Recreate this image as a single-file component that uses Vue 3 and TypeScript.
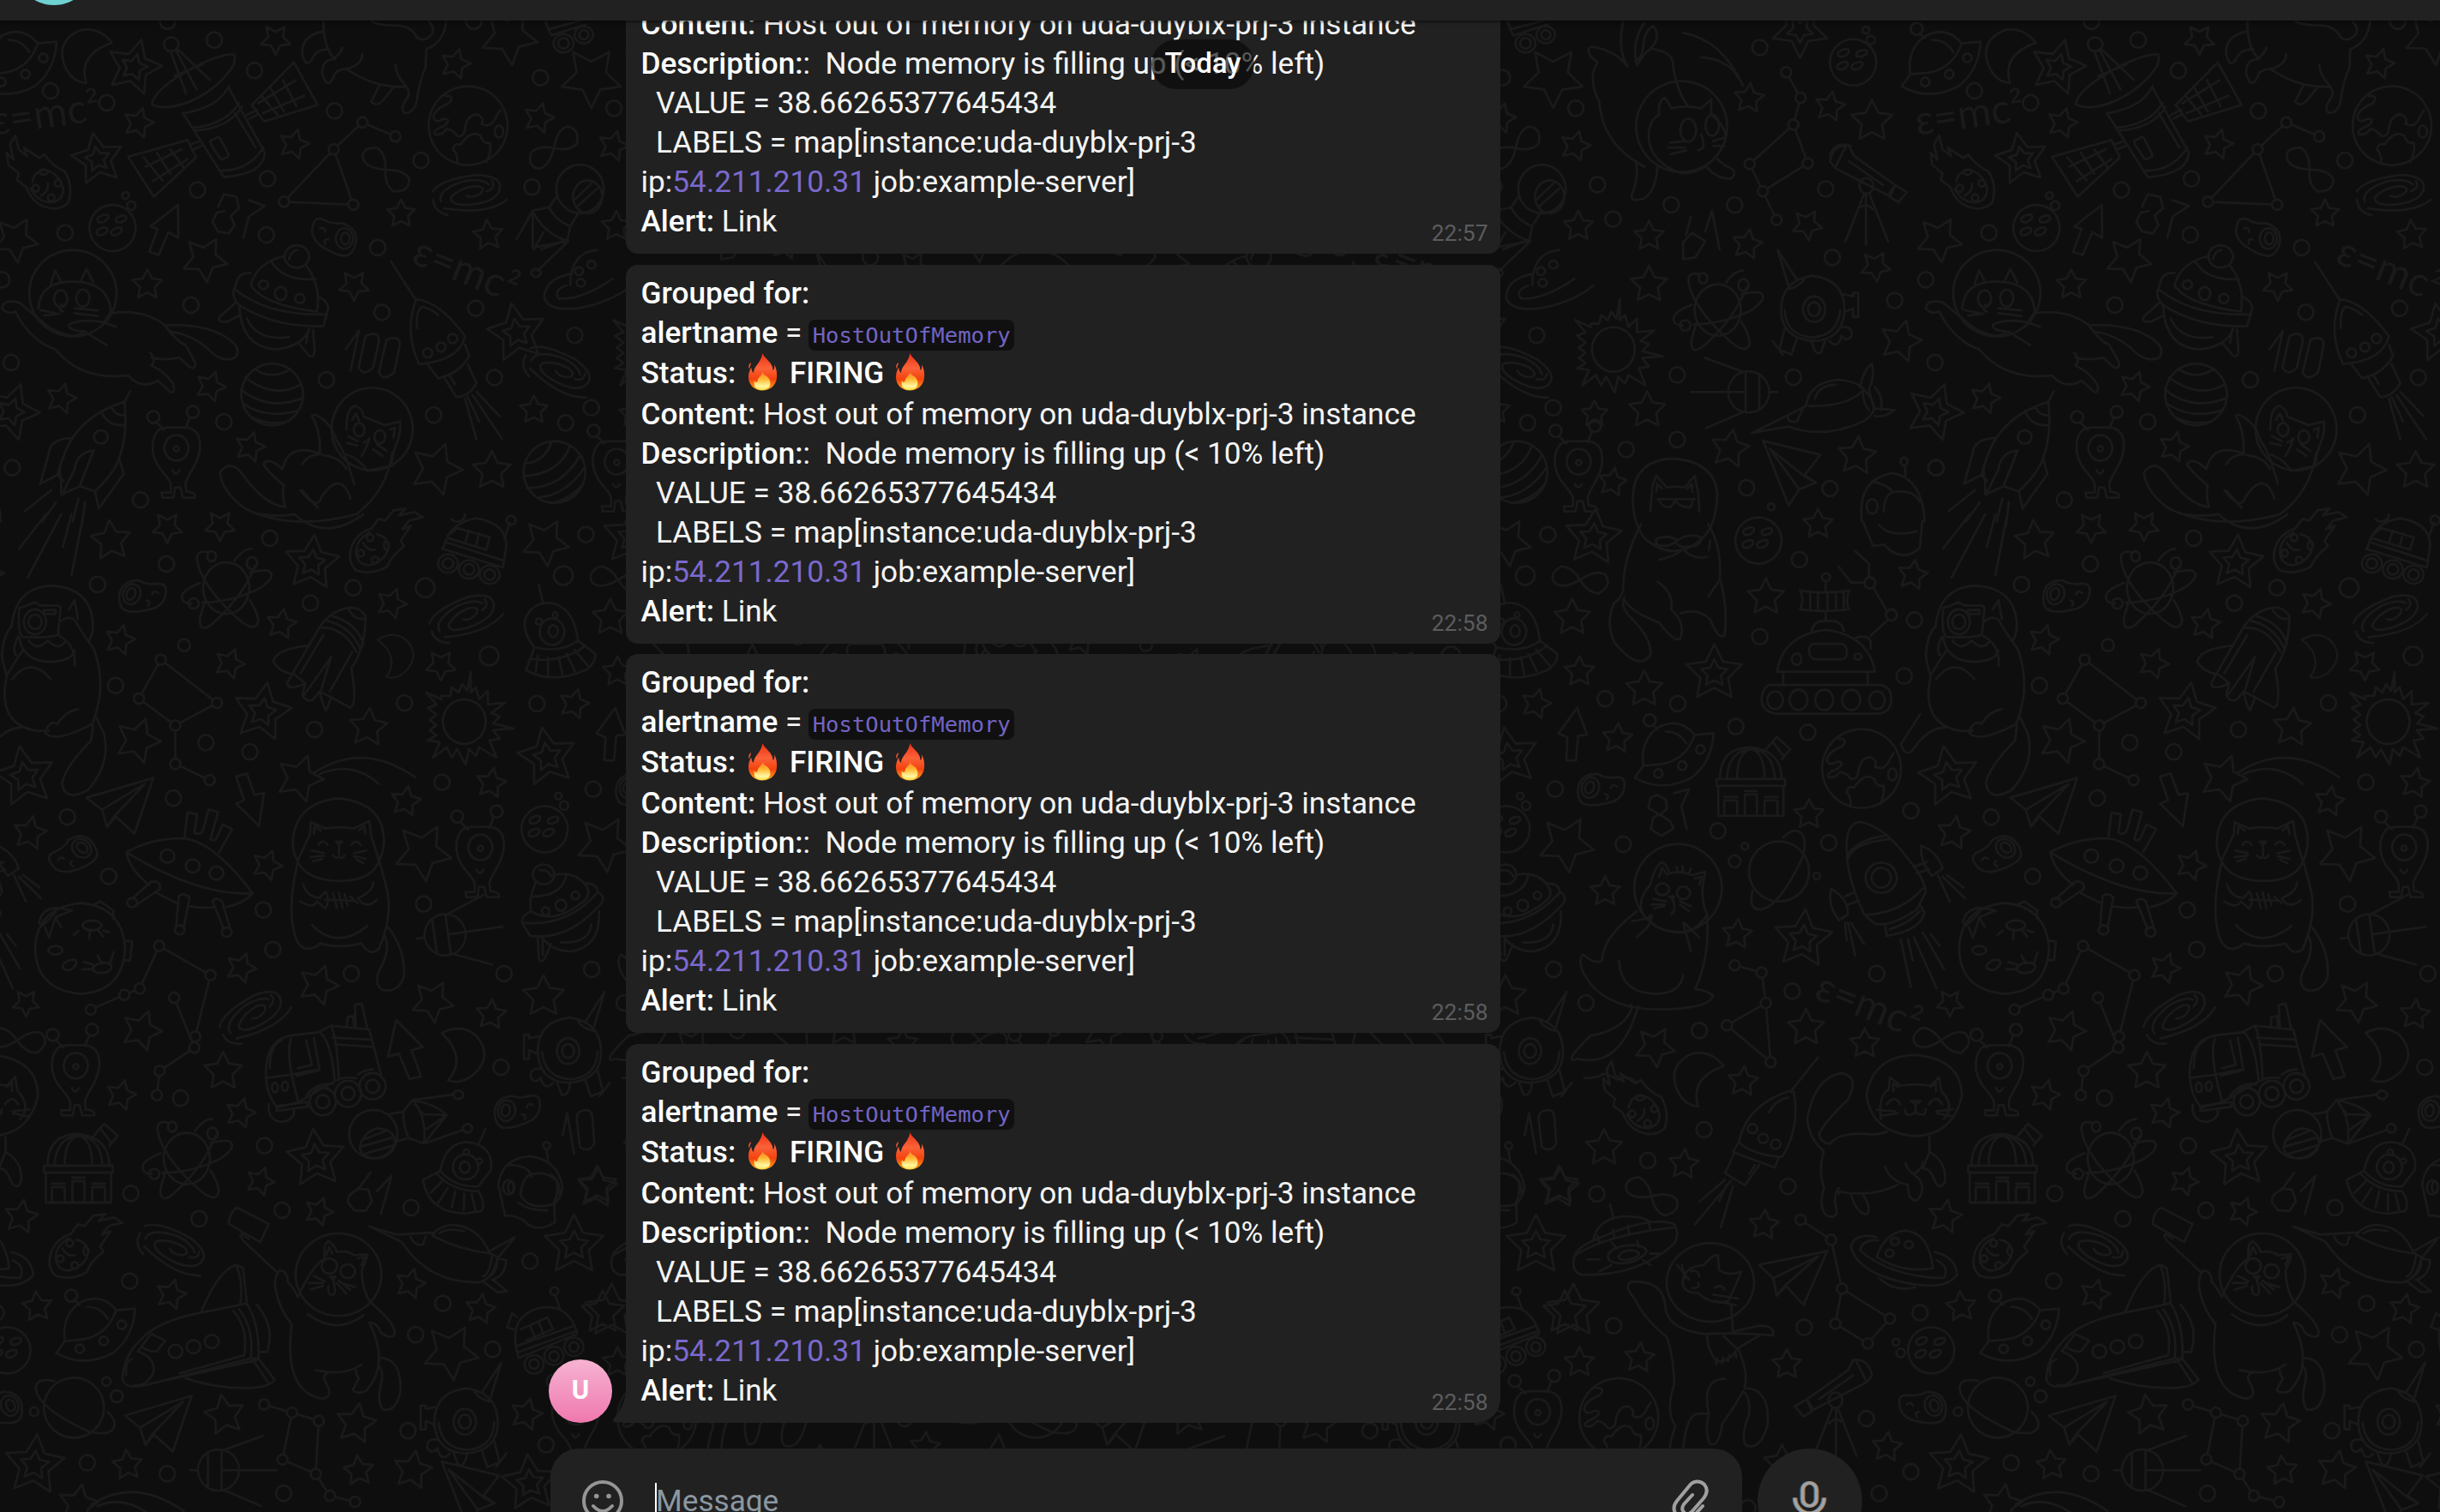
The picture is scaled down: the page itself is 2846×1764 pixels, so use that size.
<script setup lang="ts">
type Spot = [number, number, number?, number?]
type Placed = [string, number, number, number?, number?]

interface Panel {
  x: number
  y: number
  sx: number
  sy: number
  stars: Spot[]
  doubles: Spot[]
  dots: Spot[]
  shapes: Placed[]
  chains: number[][]
  strokes: string[]
}

interface Message {
  id: number
  time: string
  scrolled?: boolean
  last?: boolean
}

const messages: Message[] = [
  { id: 1, time: '22:57', scrolled: true },
  { id: 2, time: '22:58' },
  { id: 3, time: '22:58' },
  { id: 4, time: '22:58', last: true },
]

const tileWidth = 1122
const tileOffsets = [-1, 0, 1, 2].map((n) => n * tileWidth)

const L = 0.4464
const R = 0.699
const V = 0.3827

/* Doodle artwork of the chat wallpaper, one repeating tile split in panels. */
const panels: Panel[] = [
  {
    x: 0, y: 0, sx: L, sy: V,
    stars: [
      [720, 120, 18, 36], [362, 375, 18, 15], [768, 440, 18, 15], [1190, 195, 18, 15], [1048, 652, 17, 0],
      [1275, 717, 18, -5], [1408, 360, 18, 15], [385, 868, 18, 0], [925, 870, 18, 36], [550, 1178, 18, 20],
      [160, 1215, 18, 15], [653, 1363, 18, 15], [1395, 1250, 17, 0], [1285, 1435, 23, 0], [535, 790, 27, 30],
      [40, 730, 27, 30], [1330, 110, 34, 30], [1140, 1430, 31, 20], [1545, 235, 36, 36],
    ],
    doubles: [[350, 205, 33, 15], [255, 485, 31, -10], [1350, 1015, 35, -10], [28, 1255, 34, 20]],
    dots: [
      [560, 122], [665, 215], [132, 277], [279, 313], [874, 338], [1412, 237], [1100, 489], [699, 545], [516, 579],
      [1390, 570], [170, 710], [696, 716], [987, 755], [499, 930], [998, 952], [1243, 940], [1502, 1022],
      [29, 1105], [853, 1158], [1292, 1151], [1133, 1265], [585, 1286], [1478, 1289], [1545, 1243], [32, 1426],
      [367, 1524], [5, 853], [438, 65], [343, 627, 5], [328, 596, 4], [1238, 65],
    ],
    shapes: [
      ['alien', 460, 1368], ['earth', 1222, 383], ['galaxy', 1228, 588], ['galaxy', 1463, 1130, 35],
      ['stripes', 710, 1203], ['stripes', 1448, 1440, -40], ['comet', 125, 565, -90], ['saucer', 45, 190],
      ['button', 293, 695], ['bean', 872, 722], ['infinity', 1007, 517, 52], ['infinity', 1447, 452, -28],
      ['moon', 225, 172],
    ],
    chains: [[742, 615, 872, 455, 923, 624, 742, 615], [872, 455, 947, 373, 1033, 416]],
    strokes: [
      /* satellite */
      'M397,318 C400,260 560,160 612,166 C616,180 612,190 610,200 C560,290 450,350 397,318 Z M447,114 a19,21 0 1 0 1,0 M445,155 L486,285 M458,150 L514,273 M462,148 L548,243 M456,232 L530,196 M478,345 Q570,330 598,262 M478,345 L585,540 Q690,530 692,465 L598,268 M503,390 Q590,380 624,315 M512,398 Q600,390 632,325 M614,345 L668,450 M580,520 Q650,520 688,450 M549,430 l20,-12 q6,0 8,8 l20,44 q0,10 -6,10 l-10,6 q-6,0 -8,-8 l-22,-38 Z',
      'M645,350 L672,335 M652,362 L675,348 M658,320 L768,190 L830,320 L690,370 Z M682,290 L725,350 M705,265 L742,340 M740,245 L775,325 M687,345 L795,292 M675,315 L772,245 M500,440 L522,430 M506,455 L526,445 M335,478 L490,427 L512,480 L402,600 Z M375,480 L425,550 M410,465 L445,530 M445,455 L480,510 M380,508 L475,455 M400,552 L490,485',
      /* upside-down cat */
      'M845,62 Q845,150 876,180 M845,95 Q785,110 790,165 Q800,215 818,175 Q828,150 860,150 M876,180 Q840,180 842,225 Q855,275 872,235 Q875,212 905,210 Q945,200 947,165 M905,210 Q980,270 1062,264 Q1035,230 1033,198 M1062,264 Q1075,285 1060,305 Q1045,330 1057,344 Q1085,345 1090,300 Q1095,250 1112,205 L1114,150 Q1160,130 1166,65 M990,262 Q975,300 970,310 Q985,330 1005,300 L1028,266 M895,145 Q890,165 870,180 M970,65 Q990,78 1040,78 Q1075,80 1090,115 Q1110,130 1128,105 Q1138,85 1120,65',
      /* flying cat */
      'M190,762 a114,132 0 1 0 1,0 M100,940 Q105,858 190,858 Q285,860 290,950 L272,982 M133,866 L144,824 L160,860 M210,858 L226,820 L244,862 M158,885 a17,26 0 1 0 1,0 M216,883 a17,26 0 1 0 1,0 M162,928 Q150,945 165,950 M105,945 l40,10 M115,962 l40,-6 M195,940 l60,6 M195,955 l60,8',
      'M40,950 Q20,960 5,940 Q10,910 50,922 Q90,960 120,990 Q150,1018 190,1024 Q210,1020 220,1010 L278,1052 M220,1010 Q180,1010 180,990 Q210,970 270,982 L303,996 M290,955 Q370,940 430,990 Q460,1040 485,1052 L510,1105 Q512,1130 495,1118 L468,1090 Q430,1100 396,1090 M392,1075 Q410,1095 396,1115 Q430,1130 452,1170 Q460,1200 445,1195 L412,1160 Q370,1190 335,1145 Q210,1160 145,1065 Q80,1040 40,950 M430,992 Q500,985 560,1010 Q640,1050 615,1090 Q580,1110 540,1060 Q500,1020 445,1010',
      /* planet hat */
      'M655,870 Q670,800 745,780 M800,810 Q840,870 828,950 M655,870 Q690,930 828,950 M655,832 Q620,830 616,870 Q600,900 625,930 Q720,1000 845,994 L858,940 Q855,915 832,905 M612,880 Q700,965 855,958 M708,795 Q740,860 825,850 M775,748 a32,34 0 1 0 1,0 M755,790 q5,-25 22,-28 M688,855 a12,13 0 1 0 1,0 M733,875 a15,20 0 1 0 1,0 M783,896 a12,14 0 1 0 1,0 M625,932 Q630,1055 715,1065 Q790,1060 808,1002 M645,970 Q670,1040 755,1028 M618,920 L575,965 Q565,985 595,980 L628,960 M780,1045 L808,1085 Q822,1090 822,1070 L818,1005 M805,1008 L800,1045',
      'M570,630 l15,-38 l32,8 l8,34 l-22,24 l10,28 l-15,26 l-28,-6 l-15,-30 l12,-28 l20,-4 M650,610 L692,628 L650,660 L636,725',
      'M465,625 L393,690 L412,698 L390,768 L415,777 L440,708 L466,725 Z',
      /* probe with antenna */
      'M1022,798 L1085,912 M1088,912 Q1150,920 1215,1025 Q1200,1100 1095,1110 Q1055,1010 1088,912 M1090,1000 Q1085,950 1102,935 Q1125,940 1145,960 M1117,1062 a12,14 0 1 0 1,0 M1152,1044 a12,14 0 1 0 1,0 M1182,1018 a12,14 0 1 0 1,0 M1215,1050 L1226,1085 Q1200,1140 1145,1153 L1118,1112 M1160,1150 L1192,1210 Q1225,1210 1245,1168 L1222,1110 M1175,1145 l14,26 M1215,1215 L1245,1340 M1222,1210 L1252,1285 M1235,1205 L1312,1338 M1245,1195 L1305,1268',
      'M903,1065 L938,1008 L916,1130 M955,1025 q35,-20 35,15 l-15,80 q-25,30 -38,0 Z M1010,1035 q38,-15 34,20 l-14,80 q-28,30 -40,0 Z',
      /* rocket */
      'M340,1192 L325,1225 Q200,1270 165,1395 Q150,1430 160,1465 L160,1508 L208,1482 L248,1498 M325,1225 Q335,1320 312,1395 Q300,1440 248,1498 M312,1400 L323,1445 L258,1550 L248,1498 M185,1335 Q130,1340 128,1380 L105,1475 L150,1448 L166,1466 M150,1448 L160,1410 M245,1373 Q200,1380 195,1430 L162,1508 M245,1373 L208,1482 M264,1252 Q280,1300 325,1296 M292,1240 Q300,1268 326,1266 M263,1312 a18,20 0 1 0 1,0 M134,1494 L65,1558 M146,1532 L110,1590 M205,1520 L190,1590 M222,1530 L215,1600',
      /* waving cat */
      'M972,1182 a106,126 0 1 0 1,0 M905,1310 Q905,1240 930,1237 Q950,1250 950,1270 Q975,1282 1005,1296 L1045,1285 Q1048,1310 1040,1340 Q1020,1400 1025,1420 L960,1435 Q940,1400 905,1385 M920,1280 L930,1260 L938,1282 M1020,1310 l12,-6 l-4,30 M938,1290 a14,20 0 1 0 1,0 M992,1312 a14,20 0 1 0 1,0 M950,1350 q15,-10 15,-14 M965,1340 q-10,30 -20,50 M910,1330 l25,15 M905,1350 l28,8 M975,1370 l25,20 M985,1355 l25,20',
      'M835,1385 Q840,1320 815,1268 Q820,1258 840,1275 Q870,1300 880,1345 Q900,1370 925,1475 M845,1388 Q890,1395 905,1430 M790,1415 Q805,1385 835,1385 M840,1385 Q755,1345 738,1430 Q700,1390 688,1415 Q700,1440 742,1480 Q735,1500 745,1545 Q690,1540 630,1440 Q600,1400 575,1440 Q580,1500 640,1550 Q760,1620 930,1568 Q1010,1500 1025,1380 M785,1495 Q830,1560 840,1515 Q890,1430 916,1520 M790,1495 L830,1548',
      /* landing capsule */
      'M1515,502 a62,74 0 1 0 1,0 M1535,550 a38,50 0 1 0 1,0 M1500,610 L1545,560 M1508,630 L1560,575 M1455,598 L1435,632 L1392,642 L1392,755 L1482,735 L1490,690 L1508,655 M1435,632 Q1450,670 1490,690 M1392,645 Q1420,710 1482,735 M1392,642 L1350,728 M1395,760 L1420,708 M1485,735 L1405,825 M1400,820 a12,12 0 1 0 1,0',
      /* ringed planet */
      'M1490,870 Q1490,770 1560,762 M1490,835 Q1425,850 1422,905 Q1430,950 1510,940 Q1600,920 1650,870 M1480,870 Q1445,885 1460,910 Q1520,915 1600,850 M1545,795 a11,12 0 1 0 1,0 M1512,815 a11,12 0 1 0 1,0 M1517,850 a11,12 0 1 0 1,0',
      /* small rover at the top */
      'M1425,65 L1440,108 L1530,75 M1432,90 L1520,62 M1472,104 a26,28 0 1 0 1,0 M1472,116 a14,16 0 1 0 1,0 M1525,80 a24,26 0 1 0 1,0 M1525,92 a12,14 0 1 0 1,0',
    ],
  },
  {
    x: 0, y: 600, sx: L, sy: V,
    stars: [
      [437, 40, 18, 36], [575, 35, 18, 36], [735, 335, 18, 10], [313, 383, 18, 15], [600, 455, 18, 20],
      [1023, 272, 18, 20], [1152, 460, 18, 36], [1500, 578, 18, 15], [78, 972, 20, 10], [1283, 820, 18, 10],
      [1060, 875, 18, 10], [698, 1070, 18, 20], [630, 1383, 18, 20], [68, 1490, 16, 36], [1283, 1525, 18, 5],
      [290, 80, 24, -5], [1425, 85, 28, 30], [360, 690, 27, 20], [962, 650, 23, 5], [783, 805, 28, 20],
      [1105, 1030, 34, 30], [832, 1435, 24, 20], [1420, 1470, 25, 0], [1130, 1485, 25, 30],
    ],
    doubles: [[815, 148, 33, 5], [685, 603, 35, 10], [1430, 740, 35, -10], [65, 800, 36, -10]],
    dots: [
      [435, 151], [705, 73], [255, 214], [811, 271], [923, 224], [1111, 224, 11], [1472, 187, 11], [1531, 62],
      [1278, 432, 11], [481, 399, 7], [302, 522], [1057, 575], [1403, 577], [822, 656], [538, 696], [653, 724],
      [453, 865], [1155, 817], [176, 923], [284, 1104], [688, 1206], [1107, 1188], [713, 1327], [918, 1400],
      [1317, 1400], [1550, 838], [1546, 1387], [1474, 888, 5], [1459, 859, 4],
    ],
    shapes: [
      ['alien', 1254, 1018], ['galaxy', 1217, 310, -14], ['galaxy', 665, 1525, -22], ['atom', 590, 225],
      ['comet', 975, 108], ['button', 1422, 960], ['bean', 372, 250, 20, -1], ['bean', 192, 1040, -50],
      ['plane', 320, 890], ['moon', 1028, 435, 20, -0.8], ['sun', 1212, 632], ['sputnik', 1162, 1282, -8],
    ],
    chains: [
      [363, 562, 420, 443, 567, 575, 458, 644, 363, 562], [458, 644, 458, 761, 548, 811],
      [237, 1510, 325, 1465, 365, 1446, 416, 1316, 550, 1405, 510, 1592],
    ],
    strokes: [
      'M120,0 L50,105 M160,0 L72,193 M187,0 L164,100 M218,0 L187,185 M770,0 Q850,85 950,0 M680,0 Q730,8 768,0',
      /* photographer cat */
      'M30,345 Q40,220 136,218 Q240,225 243,340 Q242,370 232,385 M50,290 Q50,282 62,282 L90,268 L105,278 L150,278 Q160,280 158,292 L152,365 Q140,378 60,374 Q46,370 50,290 M91,290 a29,38 0 1 0 1,0 M91,306 a17,22 0 1 0 1,0 M115,292 h30 v12 h-30 Z M180,290 L195,262 L204,320 M160,325 Q190,300 204,340 Q220,370 245,410 Q268,480 260,560 Q250,620 240,640 M50,375 Q60,450 135,450 Q190,445 195,415 M75,385 Q95,420 125,385 Q155,420 172,385 M155,370 Q200,400 195,460 M30,340 Q8,370 5,430 Q10,470 18,490 Q55,420 60,415 M48,372 Q30,410 42,430 M18,490 Q-10,640 95,660 L128,660 M32,502 Q80,430 132,502 M204,594 Q170,600 150,640 Q130,625 118,665 Q140,700 240,640 Q245,640 238,690 Q170,770 162,820 Q170,880 230,840 Q290,760 272,670 L248,610 M55,650 Q10,650 -30,720 Q-50,740 -60,700 L-10,610',
      /* moon rover */
      'M1160,98 Q1175,25 1245,12 Q1330,30 1322,105 L1314,162 L1155,105 Z M1165,85 L1318,142 M1170,65 L1195,42 L1280,70 L1270,108 L1170,72 M1225,50 L1215,88 M1252,58 L1243,98 M1318,75 L1332,25 M1335,4 a12,14 0 1 0 1,0 M1180,15 Q1190,30 1212,15 L1215,0',
      'M1170,122 a26,28 0 1 0 1,0 M1170,134 a14,16 0 1 0 1,0 M1225,140 a26,28 0 1 0 1,0 M1225,152 a14,16 0 1 0 1,0 M1279,156 a26,28 0 1 0 1,0 M1279,168 a14,16 0 1 0 1,0',
      /* shuttle */
      'M955,310 Q940,280 910,285 Q860,295 832,350 L750,515 Q755,540 798,515 L790,550 Q800,575 818,565 L835,540 Q845,590 852,598 L866,558 L915,590 Q935,580 918,470 Q955,410 955,310 M910,288 Q925,325 955,318 M868,310 Q930,330 950,395 M855,325 Q915,340 942,410 M840,345 Q900,345 932,420 M808,400 Q720,410 714,450 Q730,480 765,488 M845,368 L785,485 M865,435 L795,550 M865,435 L838,540 M920,420 L862,540 M765,485 L798,515 M835,540 L866,558',
      'M820,788 Q950,690 1085,802 M835,792 Q920,750 990,822',
      'M617,800 L645,790 L665,855 L690,850 L677,950 L617,882 L638,872 Z',
      /* bear in a bell */
      'M1408,215 L1418,268 M1396,405 Q1365,360 1372,320 Q1390,268 1437,270 Q1500,280 1510,385 M1396,405 Q1465,425 1510,385 L1555,425 Q1560,450 1530,475 Q1440,520 1374,475 Q1385,445 1396,405 M1385,440 Q1470,455 1530,400 M1405,430 L1400,480 M1432,438 V492 M1460,435 L1470,490 M1480,425 L1502,478 M1500,412 L1535,460 M1442,318 a32,40 0 1 0 1,0 M1445,338 a12,18 0 1 0 1,0 M1408,318 a8,9 0 1 0 1,0 M1450,298 a6,9 0 1 0 1,0',
      /* landing table */
      'M330,1030 Q400,985 482,988 Q560,1000 660,1155 Q520,1165 330,1030 Q340,1085 390,1130 M410,1155 L462,1185 M495,1195 Q530,1202 558,1198 M592,1197 Q640,1185 660,1155 M437,1022 a18,20 0 1 0 1,0 M503,1052 a18,20 0 1 0 1,0 M565,1074 a18,20 0 1 0 1,0 M482,988 L490,910 L515,914 L508,970 Q520,980 530,965 L545,900 L570,908 L550,990 Q560,1000 567,985 L582,945 L607,960 L573,1030',
      'M345,1172 L395,1120 Q420,1115 418,1142 L355,1192 M345,1170 a13,14 0 1 0 1,0 M467,1165 Q480,1150 495,1168 L480,1262 M467,1165 L460,1260 M469,1253 a13,14 0 1 0 1,0 M555,1180 Q565,1165 580,1180 L602,1265 M555,1180 L585,1265 M592,1260 a13,14 0 1 0 1,0',
      /* fish cat */
      'M884,866 Q1005,880 1003,1000 Q1002,1030 990,1058 Q970,1118 885,1118 Q800,1115 778,1058 Q765,1030 765,1000 Q770,880 884,866 M778,1055 L810,975 L812,938 L850,958 Q885,950 925,958 L965,935 L970,980 L990,1055 M820,975 L822,950 L838,964 M955,975 L952,950 L938,964 M832,1008 q12,-20 24,0 M918,1008 q12,-20 24,0 M878,998 h16 l-8,10 Z M886,1008 V1045 Q878,1052 870,1040 M886,1045 Q894,1052 900,1040 M815,1025 l32,8 M812,1045 l34,-4 M925,1033 l32,-8 M925,1042 l30,8 M818,1058 l24,-8 M930,1052 l20,12',
      'M778,1060 Q750,1200 770,1280 Q785,1345 830,1315 L835,1308 Q885,1325 945,1308 Q965,1350 990,1325 Q1030,1220 1008,1130 L992,1060 M792,1128 Q800,1165 835,1170 L850,1150 Q865,1175 850,1202 L828,1180 Q820,1205 785,1180 M975,1122 Q975,1150 935,1170 L945,1185 Q965,1198 985,1175 M870,1155 L880,1200 M885,1152 L895,1200 M900,1158 L908,1192 M850,1175 L925,1178 M915,1165 L935,1185 M815,1252 Q880,1330 960,1255 M1015,1260 Q1060,1330 1055,1410 Q1040,1460 1000,1450 Q970,1430 1000,1370 Q1020,1320 1005,1285',
      /* cratered moon */
      'M210,1185 Q320,1195 327,1325 Q320,1455 210,1462 Q95,1450 92,1325 Q95,1200 210,1185 M102,1245 Q110,1200 150,1200 L188,1208 Q150,1225 145,1230 L128,1290 M102,1245 L110,1255 L145,1215 M145,1230 L160,1258 M118,1260 L128,1290 M245,1190 L262,1180 L297,1208 L295,1232 M328,1300 L345,1302 L340,1360 L326,1360 M240,1238 a25,15 0 1 0 1,0 M205,1270 l-12,12 M235,1270 l-2,24 M258,1270 l12,18 M270,1268 l15,6 M144,1316 a18,13 0 1 0 1,0 M180,1360 q20,-8 20,10 q-15,30 -35,15 q-5,-15 15,-25 M240,1385 q20,-25 45,-15 q15,10 -5,25 q-30,10 -40,-10 M220,1365 l24,8 M215,1387 h30 M255,1345 l12,25 M297,1335 l-10,35',
      /* hat with planet */
      'M1420,1068 a28,30 0 1 0 1,0 M1410,1085 q25,-2 30,20 M1445,1100 Q1500,1085 1530,1130 Q1545,1155 1530,1175 Q1450,1255 1388,1210 Q1380,1180 1400,1120 M1390,1165 Q1470,1165 1480,1098 M1530,1125 Q1560,1125 1562,1150 Q1590,1170 1560,1200 Q1480,1300 1385,1285 L1364,1245 Q1362,1225 1385,1212 M1364,1245 Q1480,1260 1560,1155 M1465,1175 a14,17 0 1 0 1,0 M1425,1198 a10,12 0 1 0 1,0 M1503,1150 a10,12 0 1 0 1,0 M1415,1288 Q1440,1330 1490,1333 Q1570,1320 1565,1210 M1465,1305 Q1540,1310 1545,1250 M1405,1290 L1408,1355 Q1418,1370 1425,1350 L1440,1310 M1418,1295 V1345',
    ],
  },
  {
    x: 0, y: 1164, sx: L, sy: V,
    stars: [
      [316, 297, 18, 15], [628, 352, 18, 15], [680, 560, 17, 20], [833, 652, 17, 20], [1072, 872, 18, 15],
      [1255, 950, 18, 10], [447, 905, 18, 15], [97, 942, 18, -5], [333, 1425, 18, -5], [937, 1442, 18, -5],
      [1375, 1270, 19, 15], [370, 100, 24, 20], [583, 225, 23, 0], [55, 668, 20, 10], [1178, 1080, 33, 30],
      [587, 1272, 24, -10], [930, 1298, 24, 10], [1078, 1440, 23, 10], [205, 1545, 24, 10], [1560, 580, 24, 5],
      [1575, 960, 26, 0],
    ],
    doubles: [[825, 490, 35, -5], [1500, 755, 36, 0], [90, 1425, 36, 5], [1385, 1480, 34, -5]],
    dots: [
      [472, 306], [691, 451], [342, 597], [520, 674], [737, 648], [1074, 640], [1309, 212], [339, 864], [1385, 803],
      [1157, 932], [1086, 1027], [1287, 1072], [305, 1215, 7], [228, 1418], [437, 1451], [1066, 1320],
      [1427, 1363], [741, 1511], [278, 1170, 5], [89, 1262, 5], [-10, 960],
    ],
    shapes: [
      ['alien', 197, 210], ['galaxy', 455, 765, 35], ['atom', 487, 490], ['comet', 190, 785], ['saucer', 250, 1010],
      ['button', 18, 1075], ['bean', 1352, 345, 10, -1], ['infinity', 45, 130, 15], ['moon', 1200, 178, 25, -1],
      ['sputnik', 570, 1440], ['observatory', 205, 520], ['saturn', 192, 1250], ['plane', 420, 1300],
      ['plane', 1235, 1500, -95], ['diver', 1220, 1290, 0, -1], ['diver', 1490, 160, 0, -1],
    ],
    chains: [
      [410, 297, 417, 223, 508, 152, 455, 0], [690, 1240, 763, 1265, 833, 1290, 825, 1452, 738, 1408, 763, 1265],
      [825, 1452, 862, 1518, 928, 1537],
    ],
    strokes: [
      /* truck */
      'M695,245 Q690,130 760,115 L835,105 Q865,130 875,255 L780,318 L725,335 Q698,300 695,245 Q710,242 760,235 Q820,220 835,220 L820,122 M760,125 Q745,180 780,318 M800,130 L815,205 L778,215 M705,215 Q705,145 735,130 M775,238 L830,222 M832,105 L865,85 L965,97 L998,245 M865,85 Q880,120 885,245 M870,122 L972,128 M875,142 L975,150 M930,90 L927,22 L945,18 L960,95 M907,85 L908,60 L922,55 L925,88 M725,330 L722,345 L805,332 L802,318 Z M702,325 Q700,380 740,378 Q770,370 768,345',
      'M718,260 a8,14 0 1 0 1,0 M744,256 a8,14 0 1 0 1,0 M843,275 a34,42 0 1 0 1,0 M843,297 a17,20 0 1 0 1,0 M909,253 a34,40 0 1 0 1,0 M909,272 a17,20 0 1 0 1,0 M973,230 a34,40 0 1 0 1,0 M973,250 a17,20 0 1 0 1,0 M800,300 Q820,262 870,262 M880,252 Q900,240 930,245 M935,235 Q950,220 975,218',
      'M1035,68 L1105,150 L1075,160 L1100,240 L1070,248 L1042,170 L1014,180 Z',
      /* landing capsule */
      'M975,342 a63,74 0 1 0 1,0 M985,398 Q1035,400 1032,450 Q1020,490 975,490 Q940,480 940,455 Q950,410 985,398 M945,435 L1010,405 M940,455 L1030,425 M955,475 L1030,450 M1015,355 L1053,348 L1078,312 Q1140,325 1167,358 L1108,445 L1068,428 L1035,438 M1053,348 Q1055,400 1068,428 M1078,312 Q1115,360 1108,445 M1085,325 L1105,355 L1167,358 L1115,400 M1078,312 L1185,295 M1197,283 a13,13 0 1 0 1,0 M1108,445 L1210,403 M1221,385 a12,13 0 1 0 1,0',
      /* sketches and flag */
      'M968,533 L935,585 Q905,600 910,625 L925,648 L955,650 L972,620 L962,585 L935,582 M985,590 L1023,543 L995,660 M620,640 L702,690 L680,745 L598,690 Q600,650 620,640 M628,725 L635,740 L725,838 M632,720 L650,735',
      /* bear in a bell */
      'M1268,400 L1252,443 M1150,528 Q1165,440 1222,440 Q1290,450 1283,525 L1250,575 Q1190,580 1150,528 L1105,555 Q1120,655 1215,658 L1258,650 Q1270,630 1250,590 M1140,535 Q1180,590 1250,590 M1125,595 L1155,560 M1145,625 L1170,580 M1180,640 L1190,590 M1212,648 L1213,598 M1242,645 L1232,598 M1216,478 a33,38 0 1 0 1,0 M1214,500 a13,17 0 1 0 1,0 M1218,462 a7,9 0 1 0 1,0 M1252,490 a7,8 0 1 0 1,0',
      /* astronaut helmet */
      'M1320,665 L1302,570 Q1310,490 1385,483 Q1460,495 1470,580 Q1465,610 1448,630 L1450,685 Q1400,720 1370,680 Q1340,660 1320,665 M1328,510 Q1380,510 1390,545 M1385,540 Q1430,525 1455,560 Q1460,600 1445,630 Q1380,650 1360,600 Q1365,550 1385,540 M1355,625 Q1380,650 1430,648 M1328,556 a14,22 0 1 0 1,0 M1335,560 a8,18 0 1 0 1,0 M1432,500 L1428,462 M1428,440 a9,11 0 1 0 1,0 M1440,540 Q1465,560 1462,600',
      /* submarine rocket */
      'M965,697 L1050,745 Q1120,870 1250,868 Q1290,860 1300,790 L1280,780 Q1250,695 1180,692 Q1140,700 1130,725 Q1200,770 1285,780 M965,697 L1035,722 L1130,716 M1072,728 Q1085,760 1105,752 L1112,728 M1148,718 Q1170,700 1212,712 M1283,770 L1345,730 L1300,795 M1285,790 Q1280,840 1262,850 M1300,795 Q1300,840 1275,852 M1300,795 L1323,800 Q1320,850 1285,860 M1265,868 L1300,898 L1325,895 L1290,862',
      /* shuttle */
      'M525,960 Q570,830 618,814 L635,825 L645,930 M618,820 Q635,860 628,935 M525,960 L645,932 Q680,1000 675,1100 L655,1100 L400,1175 Q330,1200 320,1165 Q320,1080 395,1015 Q440,980 525,960 M610,955 Q650,1010 638,1090 L470,1145 M625,950 Q665,1010 655,1100 M670,935 Q720,1000 698,1080 L680,1080 M675,1100 L718,1165 Q700,1190 640,1190 Q560,1190 485,1160 M660,1102 L700,1172 M400,1175 L670,1105 M360,1078 L395,1025 L432,1045 L410,1078 Q385,1080 370,1062 M360,1078 Q410,1100 400,1145 Q380,1190 350,1180 M330,1150 Q325,1110 345,1102 M458,1058 a18,20 0 1 0 1,0 M505,1044 a18,20 0 1 0 1,0 M553,1028 a18,20 0 1 0 1,0',
      /* standing cat */
      'M884,718 a112,126 0 1 0 1,0 M778,912 Q820,810 848,795 Q845,750 858,742 Q875,755 880,775 Q910,770 925,785 L960,782 Q955,810 945,830 Q945,880 965,925 M852,785 L860,760 L868,780 M935,795 L952,790 L945,815 M860,795 a20,23 0 1 0 1,0 M908,813 a19,21 0 1 0 1,0 M862,850 h15 l-6,10 Z M870,860 Q880,900 872,905 Q855,910 858,880 M820,848 l28,16 M808,870 l36,0 M812,890 l32,-12 M885,862 l30,28 M880,870 l25,32 M893,870 l35,12 M805,965 Q880,1030 950,968',
      'M778,912 Q770,890 752,865 Q750,830 730,832 Q715,850 720,890 Q730,950 762,995 Q740,1200 840,1222 Q875,1220 850,1170 Q840,1150 860,1142 M825,1135 Q900,1155 945,1118 M930,1135 Q930,1150 938,1160 L922,1195 Q930,1210 955,1200 Q1020,1120 965,990 Q985,990 995,1020 Q1015,1040 1030,1030 Q1040,1000 970,930 M992,1098 Q1050,1100 1046,1200 Q1035,1265 1000,1255 Q985,1230 995,1180 Q1005,1140 988,1120',
      /* rover */
      'M1355,1098 Q1335,1020 1360,980 Q1400,930 1460,948 Q1500,975 1508,1025 L1355,1098 M1350,1062 L1500,1000 M1355,1080 L1508,1015 M1362,1010 L1430,975 L1445,1010 L1375,1045 M1385,1000 L1398,1035 M1408,990 L1420,1025 M1463,948 L1450,905 M1448,883 a11,12 0 1 0 1,0 M1350,972 L1338,962 L1325,1005 L1345,1012 M1395,1090 a25,28 0 1 0 1,0 M1395,1102 a12,15 0 1 0 1,0 M1447,1064 a25,28 0 1 0 1,0 M1447,1078 a12,15 0 1 0 1,0 M1499,1036 a25,28 0 1 0 1,0 M1499,1050 a12,15 0 1 0 1,0',
      'M240,1545 Q350,1460 480,1565 M255,1550 Q320,1515 390,1575',
      'M1470,420 L1482,352 L1500,475 M1520,345 q25,-10 28,20 l5,80 q-15,30 -38,10 l-8,-85 q0,-20 13,-25',
    ],
  },
  {
    x: 628, y: 0, sx: R, sy: V,
    stars: [
      [415, 300, 18, 5], [550, 325, 18, 10], [125, 445, 18, 15], [130, 690, 18, 0], [248, 720, 18, 0],
      [412, 745, 18, 10], [512, 685, 18, 30], [626, 812, 18, 30], [157, 1262, 16, 0], [187, 1470, 17, 10],
      [620, 370, 25, 0], [248, 868, 22, 0], [245, 1250, 22, 0], [668, 1040, 25, 15], [383, 1368, 23, 10],
      [595, 1390, 23, 5],
    ],
    doubles: [[500, 90, 33, 36]],
    dots: [
      [433, 145], [162, 563], [285, 624], [188, 668], [391, 625], [543, 576], [554, 785], [658, 916], [295, 1143],
      [489, 1150], [295, 1340], [210, 1370], [411, 1487], [550, 1489], [126, 330], [618, 122, 5], [610, 92, 4],
      [727, 1426], [452, 1545, 4],
    ],
    shapes: [
      ['button', 588, 190], ['sun', 188, 1065], ['atom', 362, 945], ['alien', 130, 1410], ['sputnik', 415, 1195, 0, -1],
      ['telescope', 610, 580], ['plane', 490, 1430, -95], ['diver', 520, 940],
    ],
    chains: [
      [477, 220, 501, 298, 489, 380, 416, 500, 438, 583, 513, 498, 489, 380], [438, 583, 461, 670],
    ],
    strokes: [
      /* cat head down */
      'M205,65 Q195,150 212,202 Q190,150 150,142 Q140,160 162,190 Q145,240 165,310 Q170,440 240,508 M240,70 Q218,130 228,200 Q240,160 250,150 Q270,110 255,80 Q240,90 238,150 Q235,180 225,185 M255,150 Q290,160 288,200 Q295,280 312,320 M302,247 a76,139 0 1 0 1,0 M248,430 Q245,370 265,350 Q262,310 274,298 Q280,310 285,330 Q310,320 335,330 L352,303 L352,350 Q380,390 375,430 Q350,530 302,528 Q255,500 248,430 M313,362 a13,35 0 1 0 1,0 M353,350 a11,32 0 1 0 1,0 M335,410 Q345,455 330,458 M283,435 l28,-5 M280,450 l28,0 M285,470 l25,-12 M355,430 l18,-10 M355,445 h18 M262,510 Q260,580 240,605 Q215,620 220,590 Q232,540 226,490 M345,510 Q360,545 385,545 Q400,520 375,505 L362,485',
      'M305,100 Q370,120 405,262 M335,175 Q380,180 398,240',
      'M305,790 L325,785 L342,735 L320,710 L305,738 Z M310,715 L318,660 M342,705 L353,642 L366,760',
      'M550,470 Q560,430 585,445',
      'M5,760 L48,730',
      /* submarine */
      'M420,1320 L510,1238 Q515,1165 565,1157 Q600,1165 608,1190 Q640,1250 605,1285 Q540,1340 480,1300 Z M515,1238 Q580,1240 605,1190 M525,1215 Q530,1175 560,1172 M480,1270 Q480,1290 495,1285 L505,1245 M600,1182 Q605,1130 620,1108 Q625,1150 615,1185 M605,1195 Q605,1230 615,1250 M615,1185 Q620,1230 625,1248 M625,1180 Q640,1210 635,1250 M625,1268 Q640,1275 658,1250 L625,1245',
      /* cat in sunglasses */
      'M290,1398 Q360,1410 362,1510 Q360,1600 338,1640 Q290,1720 240,1640 Q220,1590 221,1510 Q225,1400 290,1398 M250,1560 L254,1480 L260,1450 L278,1486 Q292,1480 308,1486 L324,1450 L330,1500 L332,1560 M260,1500 L262,1475 L270,1490 M320,1500 L320,1475 L312,1490 M262,1522 H325 M265,1522 Q268,1550 285,1545 L292,1525 Q300,1550 318,1545 L322,1522',
      /* helmet */
      'M603,1590 Q595,1460 655,1442 Q705,1460 708,1590 M620,1468 Q645,1475 655,1500 Q690,1490 700,1530 M640,1560 Q640,1510 655,1500 M620,1522 a9,22 0 1 0 1,0 M676,1450 L675,1420 M673,1395 a6,12 0 1 0 1,0 M632,1600 Q650,1640 695,1620 M605,1590 L622,1665 L640,1660 Q670,1720 700,1670 L704,1590',
    ],
  },
  {
    x: 628, y: 600, sx: R, sy: V,
    stars: [
      [132, 480, 18, 0], [195, 683, 18, 5], [515, 915, 18, 0], [688, 185, 18, 10], [530, 30, 18, 0],
      [175, 1150, 18, 0], [395, 1280, 18, 5], [120, 315, 22, 0], [443, 253, 22, 0], [240, 533, 22, 0],
      [110, 1005, 33, 30],
    ],
    doubles: [[155, 70, 34, 5], [357, 485, 34, 0], [505, 1295, 35, 5]],
    dots: [
      [499, 138], [691, 322], [433, 373], [674, 493], [175, 562], [296, 577], [393, 647], [513, 665], [363, 965],
      [205, 1006], [548, 1001], [685, 904], [391, 1058, 7], [408, 1012, 4], [528, 1103, 4], [628, 1400],
      [487, 1454], [143, 1490],
    ],
    shapes: [
      ['earth', 602, 775], ['button', 430, 80], ['bean', 168, 840, 20, -1], ['infinity', 133, 200, 18],
      ['saucer', 290, 730], ['observatory', 418, 815], ['saturn', 465, 1090, -90],
    ],
    chains: [[391, 1375, 436, 1397, 443, 1490, 378, 1558, 451, 1670, 443, 1490]],
    strokes: [
      /* cat body */
      'M235,30 Q205,130 205,230 Q200,260 190,270 Q175,330 190,390 Q230,480 250,430 Q255,380 215,310 Q200,280 207,252 M207,262 Q220,300 265,330 Q290,390 300,380 Q310,330 285,290 Q290,240 262,205 M300,302 Q330,285 350,320 Q365,385 374,370 Q380,300 368,205 M347,30 Q370,100 366,200 L347,250 M260,75 Q280,60 295,80 Q315,55 335,70 Q335,100 315,98 Q300,105 292,85 Q275,105 260,90 Z M265,138 Q290,130 305,105 Q320,140 345,130 M350,80 L348,110',
      /* rover tank */
      'M543,180 a7,12 0 1 0 1,0 M543,205 V235 M500,232 Q540,245 582,232 Q575,270 582,290 Q540,300 500,290 Q508,260 500,232 M517,240 V290 M530,242 V295 M546,242 V295 M560,240 V293 M573,240 V288 M543,298 V325 M520,355 Q522,325 540,325 L558,325 Q572,335 573,355 M462,480 Q470,370 543,352 Q615,370 625,480 Z M472,480 V520 M613,480 V520 M520,395 H570 Q580,400 578,430 Q575,445 560,442 H525 Q512,435 516,405 Z M494,425 a8,17 0 1 0 1,0 M596,425 a6,9 0 1 0 1,0 M450,520 H635 Q655,530 652,570 Q650,610 625,608 H460 Q435,600 436,560 Q438,525 450,520 M458,540 a13,27 0 1 0 1,0 M497,535 a15,31 0 1 0 1,0 M540,535 a15,31 0 1 0 1,0 M585,535 a15,31 0 1 0 1,0 M628,540 a13,27 0 1 0 1,0 M592,378 Q610,365 618,385 L618,410 M618,370 L645,325 M652,290 a9,17 0 1 0 1,0 M645,295 L622,222 M616,192 a9,17 0 1 0 1,0 M615,192 L615,150 L592,112 M608,208 L585,208 L565,160',
      'M128,590 L145,672 L130,675 L126,750 H110 L112,680 L97,668 Z',
      'M262,855 l14,15 l2,28 l-12,18 l18,20 l5,22 l-20,22 l-18,-20 l4,-35 l10,-10 l-18,-20 l4,-32 Z M290,850 L315,838 L302,890 L311,960',
      /* boat rocket */
      'M578,1000 Q580,940 600,938 Q640,950 680,1050 Q705,1100 710,1150 L695,1205 Q650,1260 625,1248 L608,1222 Q575,1100 578,1000 M580,1050 Q590,1000 650,990 M580,1035 Q600,990 640,980 M635,1062 a26,46 0 1 0 1,0 M635,1078 a16,30 0 1 0 1,0 M608,1222 Q670,1215 705,1140 M642,1250 L645,1285 Q700,1270 708,1215 L702,1195 M650,1265 Q680,1250 700,1210 M690,1075 L712,1060 M695,1095 L715,1082 M702,1010 Q730,1030 738,1080 L720,1102 Q700,1060 702,1010 M575,1165 L592,1152 M580,1190 L598,1178 M552,1142 Q580,1170 580,1220 L565,1238 Q545,1190 552,1142',
      'M668,1295 L685,1440 M680,1295 L688,1360 M690,1290 L728,1445 M705,1275 L740,1385 M718,1280 L733,1315 M575,1245 L578,1300 M580,1245 L592,1345 M585,1245 L607,1310 M730,1100 L750,1180 M738,1105 L775,1170 M745,1100 L773,1138',
      /* startled cat */
      'M296,1005 a73,134 0 1 0 1,0 M240,1225 Q225,1180 250,1130 Q258,1070 270,1060 Q280,1075 282,1095 Q300,1085 320,1100 L342,1090 L338,1130 Q335,1180 345,1220 Q320,1290 285,1272 Q250,1260 250,1230 M265,1105 L270,1078 L278,1098 M325,1110 L336,1105 L332,1130 M294,1075 l3,18 M304,1072 l1,20 M318,1080 l-4,16 M270,1125 a11,18 0 1 0 1,0 M305,1135 a11,19 0 1 0 1,0 M282,1165 h8 l-3,8 Z M287,1172 Q295,1210 285,1218 M255,1172 l22,8 M252,1190 h22 M256,1202 l18,-8 M300,1180 l18,15 M300,1190 l15,20 M220,1240 Q245,1235 252,1222 Q255,1250 228,1288 M305,1245 L318,1332 M308,1248 L332,1290',
      'M228,1210 Q170,1290 170,1360 Q160,1375 138,1342 Q125,1370 150,1430 Q190,1520 290,1508 Q350,1500 355,1468 Q345,1450 325,1448 Q350,1350 345,1220 M198,1360 Q200,1460 260,1462 Q300,1460 305,1405 M218,1495 L220,1500 Q210,1570 150,1590 Q100,1680 130,1660 Q200,1690 230,1500',
    ],
  },
  {
    x: 628, y: 1164, sx: R, sy: V,
    stars: [
      [608, 140, 18, 0], [405, 255, 18, 5], [306, 508, 18, 5], [440, 693, 18, 5], [478, 1118, 18, 0],
      [132, 1112, 18, 0], [232, 1098, 18, 5], [645, 1370, 18, 5], [510, 92, 22, 0], [258, 150, 24, 30],
      [173, 458, 22, 0], [98, 572, 23, 0], [122, 955, 32, 0], [470, 1420, 22, 0],
    ],
    doubles: [],
    dots: [
      [332, 100], [340, 402], [246, 496], [161, 598], [480, 575], [507, 1005], [189, 1000], [611, 1283], [685, 1445],
      [632, 1511], [660, 1050, 4], [668, 1083, 5], [413, 1555],
    ],
    shapes: [
      ['earth', 197, 1280], ['alien', 62, 1265], ['bean', 705, 1250, -20], ['infinity', 252, 605, 38], ['moon', 330, 250],
      ['comet', 240, 345, -90], ['telescope', 560, 1240, 0, -1], ['plane', 490, 850, 5],
    ],
    chains: [
      [501, 677, 552, 738, 570, 887, 559, 994, 613, 1054, 650, 978, 570, 887],
    ],
    strokes: [
      /* probe */
      'M530,182 L485,285 M490,288 Q500,400 470,485 Q420,480 398,440 Q410,330 480,285 Z M480,305 Q460,310 448,350 M420,385 a8,14 0 1 0 1,0 M438,415 a8,14 0 1 0 1,0 M459,433 a8,14 0 1 0 1,0 M398,440 L388,470 L458,518 L465,485 M390,475 L375,535 L408,572 L432,510 M425,510 l-10,28 M375,555 L332,622 M385,558 L325,690 M378,570 L365,620 M388,575 L368,700',
      /* happy cat */
      'M690,174 Q770,185 770,300 Q755,420 690,422 Q620,410 611,300 Q620,180 690,174 M635,370 Q630,300 648,280 L650,242 L668,268 Q690,260 718,268 L732,242 L736,285 Q760,330 740,370 M656,285 L655,260 L664,272 M727,285 L727,260 L718,272 M645,325 q12,-32 22,0 M715,325 q12,-32 22,0 M685,315 h16 l-8,10 Z M693,325 V345 Q690,360 677,355 L675,340 M693,345 Q695,360 708,355 L710,340 M628,342 l30,4 M635,360 l28,-8 M728,346 l28,-6 M728,352 l26,10',
      'M645,408 Q630,420 610,415 Q565,410 550,445 Q535,445 532,415 Q540,380 580,310 Q600,240 570,230 Q525,240 512,370 Q515,430 540,468 Q530,520 540,580 Q530,640 545,665 Q565,675 560,640 Q555,600 565,580 M562,590 Q620,610 663,570 M565,598 L568,590 M585,600 Q595,660 612,660 Q620,640 605,600 M642,515 Q650,560 680,570 Q680,620 695,618 Q710,590 700,555 L690,538 Q705,520 705,500 M676,505 Q678,525 692,540 M716,425 V470 Q745,500 742,560 Q735,590 725,560 Q718,520 705,520 L716,470',
      /* tilted saucer */
      'M155,740 Q160,680 200,667 Q240,665 250,685 M150,745 Q250,660 290,690 Q300,720 290,750 Q230,850 135,845 Q115,830 125,780 Q135,755 155,740 M125,785 Q180,720 293,700 M188,667 L183,630 M165,745 L162,725 M190,730 L188,708 M215,718 L213,695 M250,705 L248,685 M212,755 q30,-5 32,20 q-15,35 -45,35 q-25,-5 -18,-30 q10,-22 31,-25 M215,770 q18,0 16,15 q-10,15 -24,15 q-14,-5 -8,-16 q6,-12 16,-14 M228,740 L232,760 M195,765 L185,745 M165,798 H145 M185,815 L165,835 M250,780 H265 M238,800 L250,815',
      /* winking cat */
      'M350,748 a73,120 0 1 0 1,0 M275,935 Q270,860 218,866 Q205,880 225,920 Q240,980 278,1035 Q290,1100 290,1180 Q275,1260 292,1305 Q285,1340 282,1380 M305,880 Q300,820 340,815 Q355,780 363,785 L365,830 Q380,850 402,835 Q395,870 380,925 Q355,940 330,900 Q310,900 305,880 M320,885 Q335,885 330,868 M318,835 q10,-10 14,14 M358,885 q10,-15 16,5 M295,815 l20,45 M303,815 l5,40 M355,905 l42,12 M358,925 l35,12 M275,935 Q275,1010 340,1025 Q400,1020 455,1030 Q460,1000 432,1000 L388,1018 L385,935 M345,1030 Q345,1070 360,1108 Q385,1110 395,1070 L372,1030 M395,1070 L432,1030 M362,1100 l-2,18 M372,1096 l-2,18 M382,1090 l-2,18 M392,1080 l2,18',
      'M398,1075 Q415,1150 407,1190 Q450,1190 446,1300 Q435,1380 410,1365 Q400,1340 415,1270 Q418,1220 405,1200 Q390,1250 370,1300 Q365,1370 350,1360 Q340,1320 348,1270 Q340,1265 325,1270 Q308,1290 305,1385 M348,1270 Q335,1160 375,1162',
      /* ringed planet */
      'M628,790 Q640,720 675,710 Q715,715 722,825 Q670,840 628,790 M628,730 Q590,715 585,760 Q595,830 660,862 Q740,900 762,845 Q760,790 725,775 M630,740 Q605,735 600,770 Q650,850 740,855 Q750,820 728,800 M632,855 Q660,900 692,882 M658,732 a7,11 0 1 0 1,0 M681,742 a7,11 0 1 0 1,0 M649,768 a7,11 0 1 0 1,0',
      /* comet flame */
      'M140,245 Q165,245 170,232 Q185,235 195,250 Q210,235 225,255',
    ],
  },
]

const glyphs: Record<string, string> = {
  alien:
    'M-20,-22 Q-29,-14 -27,4 C-24,24 -7,32 -6,42 L-6,51 L-17,51 L-16,57 L-3,57 L-1,45 L5,45 L8,57 L22,57 Q24,51 12,50 L11,41 C13,30 28,16 28,-4 Q28,-24 10,-25 L-6,-25 Q-16,-25 -20,-22 M0,-16 a14,15 0 1 0 1,0 M0,-3 a3,3 0 1 0 1,0 M-27,-44 a7,7 0 1 0 1,0 M-23,-31 L-14,-22 M19,-50 a7,7 0 1 0 1,0 M16,-36 L11,-24 M-4,25 q4,8 8,0',
  earth:
    'M0,-46 a46,46 0 1 0 1,0 M-27,-35 Q-14,-35 -22,-26 Q-38,-20 -40,-10 Q-38,-2 -28,-8 Q-18,-8 -27,0 Q-42,6 -38,10 Q-30,12 -25,4 Q-18,4 -12,12 Q-4,14 -3,2 Q0,-14 12,-13 Q20,-8 16,-2 Q28,4 34,-12 L38,-18 M-12,42 Q-12,32 -17,28 Q-16,20 -8,22 Q4,4 15,12 Q18,22 26,20 Q28,30 22,42 M36,0 a5,7 0 1 0 1,0',
  galaxy:
    'M-4,3 Q2,7 12,1 Q20,-7 6,-8 Q-12,-6 -22,5 Q-24,14 -4,14 Q28,12 34,-2 Q40,-20 8,-21 Q-34,-16 -43,-2 M-43,8 Q-42,22 -26,26 M-34,10 Q-38,-4 -6,-14 Q14,-17 22,-10 M-30,18 Q20,26 43,8 M26,-14 Q30,-6 20,-2',
  atom:
    'M0,-30 a27,30 0 1 0 1,0 M-50,14 Q-56,4 -30,-6 M-28,17 Q10,16 40,0 Q60,-14 50,-20 Q44,-22 28,-18 M-50,14 Q-48,18 -40,18 M-22,-42 Q-40,-46 -30,-20 Q-20,4 8,30 Q34,56 38,38 Q36,26 28,14 M30,-46 Q20,-46 10,-32 M34,-26 Q20,10 -16,42 Q-32,54 -30,34 L-24,14 M-17,-43 a5,6 0 1 0 1,0 M30,-36 a6,7 0 1 0 1,0 M-38,12 a6,6 0 1 0 1,0',
  stripes:
    'M0,-36 a36,36 0 1 0 1,0 M-20,-30 Q0,-16 22,-30 M-31,-20 Q4,6 34,-12 M-36,-6 Q-4,20 36,4 M-34,10 Q-6,30 32,18 M-26,25 Q-6,36 16,32',
  comet:
    'M-26,0 Q-22,-18 -2,-25 L6,-36 L14,-34 L24,-46 L38,-48 L30,-40 L48,-44 L58,-38 L42,-34 L34,-24 L44,-28 L32,-10 L36,-4 Q22,6 16,20 Q-2,30 -20,24 Q-30,14 -26,0 M-4,-20 Q-20,-12 -20,4 Q-18,18 -4,18 Q16,12 18,-4 Q16,-16 4,-18 M-4,-18 a4,4 0 1 0 1,0 M15,-10 a3,5 0 1 0 1,0 M-15,0 a4,4 0 1 0 1,0 M2,8 a4,4 0 1 0 1,0 M-12,-8 q6,10 14,8',
  saucer:
    'M-36,14 Q-40,-14 -20,-30 Q6,-44 24,-22 Q12,12 -24,13 L-36,14 L-46,28 Q-14,46 20,28 Q44,10 46,-24 L24,-22 M30,-10 a5,5 0 1 0 1,0 M9,9 a5,5 0 1 0 1,0 M-19,18 a5,5 0 1 0 1,0 M-29,-46 a7,7 0 1 0 1,0 M-25,-34 L-19,-28 M-10,-26 Q6,-26 14,-12',
  button:
    'M0,-27 a27,27 0 1 0 1,0 M-11,-15 q8,-2 6,4 q-5,6 -11,4 q-4,-5 5,-8 M10,-14 q8,-2 6,4 q-5,5 -11,3 q-3,-5 5,-7 M-12,0 q8,-2 6,4 q-5,6 -11,4 q-4,-5 5,-8 M5,0 q8,-2 6,4 q-5,6 -11,4 q-4,-5 5,-8',
  bean:
    'M-24,-14 Q-22,-24 -12,-20 Q0,-14 10,-16 Q28,-10 26,6 Q22,24 10,22 Q-2,20 -18,8 Q-28,-2 -24,-14 M12,-10 a10,12 0 1 0 1,0 M13,-5 a5,7 0 1 0 1,0 M-16,-10 q6,-2 6,4 M-10,8 q-2,-6 4,-5',
  infinity: 'M0,0 Q14,-18 26,-15 Q38,-6 26,8 Q14,12 0,0 Q-14,-12 -26,-8 Q-38,6 -26,13 Q-14,16 0,0',
  moon: 'M30,-16 Q14,-36 -8,-30 Q-34,-18 -26,8 Q-18,30 0,31 Q-10,-2 30,-16',
  plane: 'M-42,-10 L36,-33 L14,32 L-8,12 L-18,24 L-24,4 Z M-24,4 L26,-26 L-10,12 L-18,24',
  sun:
    'M0,-26 a25,26 0 1 0 1,0 M8,-58 L4,-36 L-2,-44 L-6,-34 L-14,-40 L-16,-30 L-26,-30 L-26,-26 L-44,-34 L-32,-20 L-42,-16 L-32,-8 L-40,-2 L-32,4 L-40,10 L-32,16 L-42,22 L-28,24 L-36,42 L-20,30 L-14,42 L-8,32 L2,50 L6,32 L14,40 L18,30 L38,42 L30,22 L42,20 L34,10 L58,8 L34,2 L42,-6 L32,-10 L48,-22 L28,-20 L28,-36 L18,-26 L14,-40 L8,-34 Z',
  sputnik: 'M0,-24 a24,24 0 1 0 1,0 M-12,-21 V21 M4,-23 V23 M-33,0 H-24 M4,0 H68 M8,-24 L52,-40 M8,24 L50,42',
  telescope:
    'M-42,-34 Q-38,-54 -20,-52 L-14,-40 L34,-6 L26,6 L-36,-26 Z M-24,-50 L-36,-26 M34,-6 L28,8 L38,14 L48,2 Z M0,-14 a8,9 0 1 0 1,0 M-20,-34 L20,-6 M-2,4 L-24,60 M0,4 V64 M4,4 L26,60 M-6,20 Q0,14 8,22',
  observatory:
    'M-36,-3 Q-36,-40 0,-40 Q36,-36 36,-3 M-28,-4 Q-26,-36 0,-38 Q26,-36 28,-4 M-16,-4 Q-16,-34 0,-38 Q16,-34 16,-4 M-40,-3 H40 V5 H-40 Z M-38,5 V40 H38 V5 M-31,40 V22 H-16 V40 M-7,40 V15 H7 V40 M16,40 V22 H31 V40 M-7,11 H7 M-31,18 H-16 M16,18 H31 M18,-38 L30,-52 L46,-38 L36,-26 M26,-46 L38,-30',
  saturn:
    'M0,-35 a35,35 0 1 0 1,0 M-22,-31 Q-44,-36 -44,-22 Q-42,0 18,28 Q46,34 48,20 Q48,12 40,5',
  diver:
    'M0,-38 Q38,-34 38,2 Q36,38 0,38 Q-36,34 -36,2 Q-36,-32 0,-38 M-32,2 Q-30,32 0,34 Q30,32 33,2 M2,-14 a13,15 0 1 0 1,0 M2,-7 a7,8 0 1 0 1,0 M-30,-22 Q-14,-24 -8,-36 M-18,-34 L-40,-68 L-28,-28 M37,-16 L48,-14 V-18 H54 V10 H48 V0 L39,4 M-32,24 L-38,48 L-24,54 L-18,36 M0,38 Q2,54 10,52 L16,36 M34,22 Q48,20 46,32 Q42,40 34,32 M20,38 Q30,48 34,34 M-46,38 L-34,54',
}

const formulas = [
  { x: -8, y: 158, rot: -8 },
  { x: 478, y: 306, rot: 22 },
  { x: 992, y: 1164, rot: 22 },
]

function starPath(cx: number, cy: number, r: number, rot: number): string {
  const points: string[] = []
  for (let i = 0; i < 10; i++) {
    const radius = i % 2 === 0 ? r : r * 0.5
    const angle = ((rot + i * 36 - 90) * Math.PI) / 180
    points.push(`${(cx + radius * Math.cos(angle)).toFixed(1)},${(cy + radius * Math.sin(angle)).toFixed(1)}`)
  }
  return `M${points.join('L')}Z`
}

function circlePath(cx: number, cy: number, r: number): string {
  return `M${cx - r},${cy}a${r},${r} 0 1 0 ${2 * r},0a${r},${r} 0 1 0 ${-2 * r},0`
}

function pointArt(p: Panel): string {
  const at = (x: number, y: number): [number, number] => [p.x + x * p.sx, p.y + y * p.sy]
  const out: string[] = []
  p.stars.forEach(([x, y, r = 18, rot = 0]) => out.push(starPath(...at(x, y), r, rot)))
  p.doubles.forEach(([x, y, r = 34, rot = 0]) => {
    out.push(starPath(...at(x, y), r, rot), starPath(...at(x, y), r * 0.48, rot))
  })
  p.dots.forEach(([x, y, r = 9]) => out.push(circlePath(...at(x, y), r)))
  p.chains.forEach((chain) => {
    for (let i = 0; i < chain.length; i += 2) {
      const [x, y] = at(chain[i], chain[i + 1])
      out.push(circlePath(x, y, 6))
      if (i + 3 < chain.length) {
        const [nx, ny] = at(chain[i + 2], chain[i + 3])
        const d = Math.hypot(nx - x, ny - y)
        const ux = ((nx - x) / d) * 6
        const uy = ((ny - y) / d) * 6
        out.push(`M${x + ux},${y + uy}L${nx - ux},${ny - uy}`)
      }
    }
  })
  return out.join('')
}

function placement(p: Panel, s: Placed): string {
  const [, x, y, rot = 0, flip = 1] = s
  const size = Math.abs(flip)
  return `translate(${p.x + x * p.sx} ${p.y + y * p.sy}) rotate(${rot}) scale(${flip} ${size})`
}
</script>

<template>
  <div class="chat">
    <svg class="wallpaper" width="2846" height="1764" viewBox="0 0 2846 1764" aria-hidden="true">
      <defs>
        <g id="doodles">
          <template v-for="(p, i) in panels" :key="i">
            <path :d="pointArt(p)" />
            <path v-for="(s, j) in p.shapes" :key="`g${j}`" :d="glyphs[s[0]]" :transform="placement(p, s)" />
            <g :transform="`translate(${p.x} ${p.y}) scale(${p.sx} ${p.sy})`">
              <path v-for="(d, j) in p.strokes" :key="`s${j}`" :d="d" vector-effect="non-scaling-stroke" />
            </g>
          </template>
          <text
            v-for="(f, i) in formulas"
            :key="`f${i}`"
            class="formula"
            :transform="`translate(${f.x} ${f.y}) rotate(${f.rot})`"
          >ɛ=mc²</text>
        </g>
      </defs>
      <use v-for="x in tileOffsets" :key="x" href="#doodles" :x="x" />
    </svg>

    <header class="topbar"><span class="topbar-avatar"></span></header>

    <main class="messages">
      <div class="date-pill">Today</div>
      <article v-for="m in messages" :key="m.id" class="bubble" :class="{ last: m.last, scrolled: m.scrolled }">
        <div v-if="m.last" class="avatar">U</div>
        <svg v-if="m.last" class="tail" width="18" height="50" viewBox="0 0 18 50">
          <path d="M18,0 H16 C16,22 10,36 1.5,44 C-1,47 0,49.5 3,49.5 H18 Z" fill="#212121" />
        </svg>
        <template v-if="!m.scrolled">
          <p class="line"><b>Grouped for:</b></p>
          <p class="line"><b>alertname</b> = <code>HostOutOfMemory</code></p>
          <p class="line status">
            <b>Status: </b><svg v-for="n in 2" :key="n" class="fire" :class="`fire-${n}`" viewBox="0 0 44 44">
              <path d="M22.500,0 C24,6 35,11 34.500,20 C36.500,19 36.500,16 36,13 C39,18 39.500,24 39,29 C38,38 31,43.500 22,43.500 C13,43.500 6,37 6,28 C6,23 7.500,19 9.500,17 C9.500,20 10.500,22 12,23 C12,15 20.500,12 22.500,0 Z M9,11 C6,13 5.500,16.500 7.500,18.500 C7,15 9,14 9,11 Z" fill="url(#flame)" />
              <path d="M23,21 C22,27 29,25 31,32 C33,39 28,43 22,43 C15,43 11.500,39 13,32 C14,34 15.500,35 16.500,33 C17,27 22,27 23,21 Z" fill="url(#core)" />
            </svg><b class="firing">FIRING</b>
          </p>
        </template>
        <p class="line"><b>Content:</b> Host out of memory on uda-duyblx-prj-3 instance</p>
        <p class="line"><b>Description:</b>:&nbsp; Node memory is filling up (&lt; 10% left)</p>
        <p class="line">&nbsp; VALUE = 38.66265377645434</p>
        <p class="line">&nbsp; LABELS = map[instance:uda-duyblx-prj-3</p>
        <p class="line">ip:<a>54.211.210.31</a> job:example-server]</p>
        <p class="line"><b>Alert:</b> Link</p>
        <time class="time">{{ m.time }}</time>
      </article>
    </main>

    <footer class="composer">
      <div class="field">
        <svg class="smile" width="50" height="50" viewBox="0 0 50 50" fill="none" stroke="#959595" stroke-width="4" stroke-linecap="round">
          <circle cx="25" cy="25" r="22" />
          <path d="M14,31 Q25,43 36,31" />
          <circle cx="17.700" cy="19.500" r="2.800" fill="#959595" stroke="none" />
          <circle cx="32" cy="19.500" r="2.800" fill="#959595" stroke="none" />
        </svg>
        <span class="caret"></span>
        <span class="placeholder">Message</span>
        <svg class="clip" width="44" height="50" viewBox="0 0 44 50" fill="none" stroke="#a0a0a0" stroke-width="4" stroke-linecap="round">
          <path d="M36,31 L26,42 C20,49 11,48 6,42 C1,36 2,30 6,25 L20,8 C25,1 33,1 38,6 C42,11 41,17 37,22 L23,38 C20,41 16,41 14,38 C11,35 12,32 14,29 L24,18" />
        </svg>
      </div>
      <button class="mic" aria-label="Voice">
        <svg width="44" height="50" viewBox="0 0 44 50" fill="none" stroke-width="4" stroke-linecap="butt">
          <g stroke="#3f78a8"><path d="M12.500,12 a8,8 0 0 1 16,0 v11 a8,8 0 0 1 -16,0 Z M3.500,21.500 a17,18 0 0 0 34,0" /></g>
          <g stroke="#b0763f"><path d="M14.500,12 a8,8 0 0 1 16,0 v11 a8,8 0 0 1 -16,0 Z M5.500,21.500 a17,18 0 0 0 34,0" /></g>
          <g stroke="#a2a2a2" stroke-width="3.600"><path d="M13.500,12 a8,8 0 0 1 16,0 v11 a8,8 0 0 1 -16,0 Z M4.500,21.500 a17,18 0 0 0 34,0 M21.500,39 v8" /></g>
        </svg>
      </button>
    </footer>

    <svg class="gradients" width="0" height="0" aria-hidden="true">
      <defs>
        <linearGradient id="flame" x1="0" y1="0" x2="0" y2="1">
          <stop offset="0" stop-color="#ee2f14" />
          <stop offset="0.400" stop-color="#fb6238" />
          <stop offset="0.700" stop-color="#f4420e" />
          <stop offset="0.900" stop-color="#fb8a14" />
          <stop offset="1" stop-color="#fdb92a" />
        </linearGradient>
        <linearGradient id="core" x1="0" y1="0" x2="0" y2="1">
          <stop offset="0" stop-color="#ff7a38" />
          <stop offset="0.400" stop-color="#ffb42c" />
          <stop offset="0.800" stop-color="#fff7a0" />
          <stop offset="1" stop-color="#ffe24a" />
        </linearGradient>
      </defs>
    </svg>
  </div>
</template>

<style>
body {
  background: #0f0f0f;
  overflow: hidden;
}
</style>

<style scoped>
.chat {
  position: relative;
  width: 2846px;
  height: 1764px;
  display: flex;
  flex-direction: column;
  overflow: hidden;
  background: #0e0e0e;
  color: #f4f4f4;
  font-family: Roboto, sans-serif;
  font-size: 35.2px;
}

.wallpaper {
  position: absolute;
  inset: 0;
  fill: none;
  stroke: #1a1a1a;
  stroke-width: 2.8;
  stroke-linejoin: round;
  stroke-linecap: round;
}

.formula {
  font: 400 48px Lato, "DejaVu Sans", sans-serif;
  fill: #1a1a1a;
  stroke: none;
}

.gradients {
  position: absolute;
}

.topbar {
  position: relative;
  z-index: 2;
  flex: none;
  height: 24px;
  background: #212121;
  box-shadow: 0 1px 4px rgba(0, 0, 0, 0.7);
  overflow: hidden;
}

.topbar-avatar {
  position: absolute;
  left: 17px;
  top: -86px;
  width: 92px;
  height: 92px;
  border-radius: 50%;
  background: #6fd0d2;
}

.messages {
  position: relative;
  flex: 1;
  min-height: 0;
  overflow: hidden;
  display: flex;
  flex-direction: column;
  justify-content: flex-end;
  gap: 12.5px;
  padding: 0 0 30.5px 730px;
}

.bubble {
  position: relative;
  flex: none;
  box-sizing: border-box;
  width: 1020px;
  height: 442px;
  padding: 10px 18px 0 17.5px;
  border-radius: 14px;
  background: #212121;
}

.bubble.scrolled {
  height: 301px;
}

.bubble.last {
  border-bottom-left-radius: 0;
  border-bottom-right-radius: 28px;
}

.line {
  margin: 0;
  height: 46px;
  line-height: 46px;
  white-space: pre;
}

.line.status {
  display: flex;
  align-items: center;
  height: 49px;
  line-height: 49px;
}

.line b {
  font-weight: 500;
  color: #fff;
}

.line a {
  color: #7b69cf;
}

code {
  display: inline-block;
  box-sizing: border-box;
  height: 36px;
  margin-left: -1px;
  padding: 0 4.500px;
  border-radius: 8px;
  background: #101010;
  color: #7464c4;
  font: 25.600px/36px "DejaVu Sans Mono", monospace;
  vertical-align: baseline;
}

.fire {
  width: 44px;
  height: 44px;
  margin-top: -2px;
}

.fire-1 {
  order: 1;
}

.firing {
  order: 2;
  margin: 0 8px 0 10px;
}

.fire-2 {
  order: 3;
}

.time {
  position: absolute;
  right: 14.5px;
  bottom: 8px;
  font-size: 26.400px;
  line-height: 32px;
  color: #5c5c5f;
}

.avatar {
  position: absolute;
  left: -90px;
  bottom: 0;
  width: 74px;
  height: 74px;
  border-radius: 50%;
  background: linear-gradient(#f6b3d2, #ef78ae);
  color: #fff;
  font-weight: 700;
  font-size: 31px;
  line-height: 71px;
  text-align: center;
}

.tail {
  position: absolute;
  left: -15.500px;
  bottom: 0;
}

.date-pill {
  position: absolute;
  z-index: 1;
  left: 1343px;
  top: 22px;
  width: 120px;
  height: 58px;
  border-radius: 29px;
  background: rgba(9, 9, 9, 0.67);
  color: #fff;
  font-size: 33px;
  font-weight: 500;
  line-height: 55px;
  text-align: center;
}

.composer {
  position: relative;
  flex: none;
  height: 74px;
  padding-left: 642px;
  display: flex;
  gap: 18px;
}

.field {
  flex: none;
  box-sizing: border-box;
  width: 1390px;
  height: 122px;
  padding: 0 38px 0 36px;
  border-radius: 33px;
  background: #212121;
  display: flex;
  align-items: center;
}

.caret {
  width: 2px;
  height: 42px;
  margin-left: 36px;
  background: #fff;
}

.placeholder {
  flex: 1;
  margin-left: -1px;
  color: #8c98a2;
  line-height: 48px;
}

.mic {
  flex: none;
  width: 122px;
  height: 122px;
  padding: 0;
  border: 0;
  border-radius: 50%;
  background: #212121;
  display: flex;
  align-items: center;
  justify-content: center;
}
</style>
